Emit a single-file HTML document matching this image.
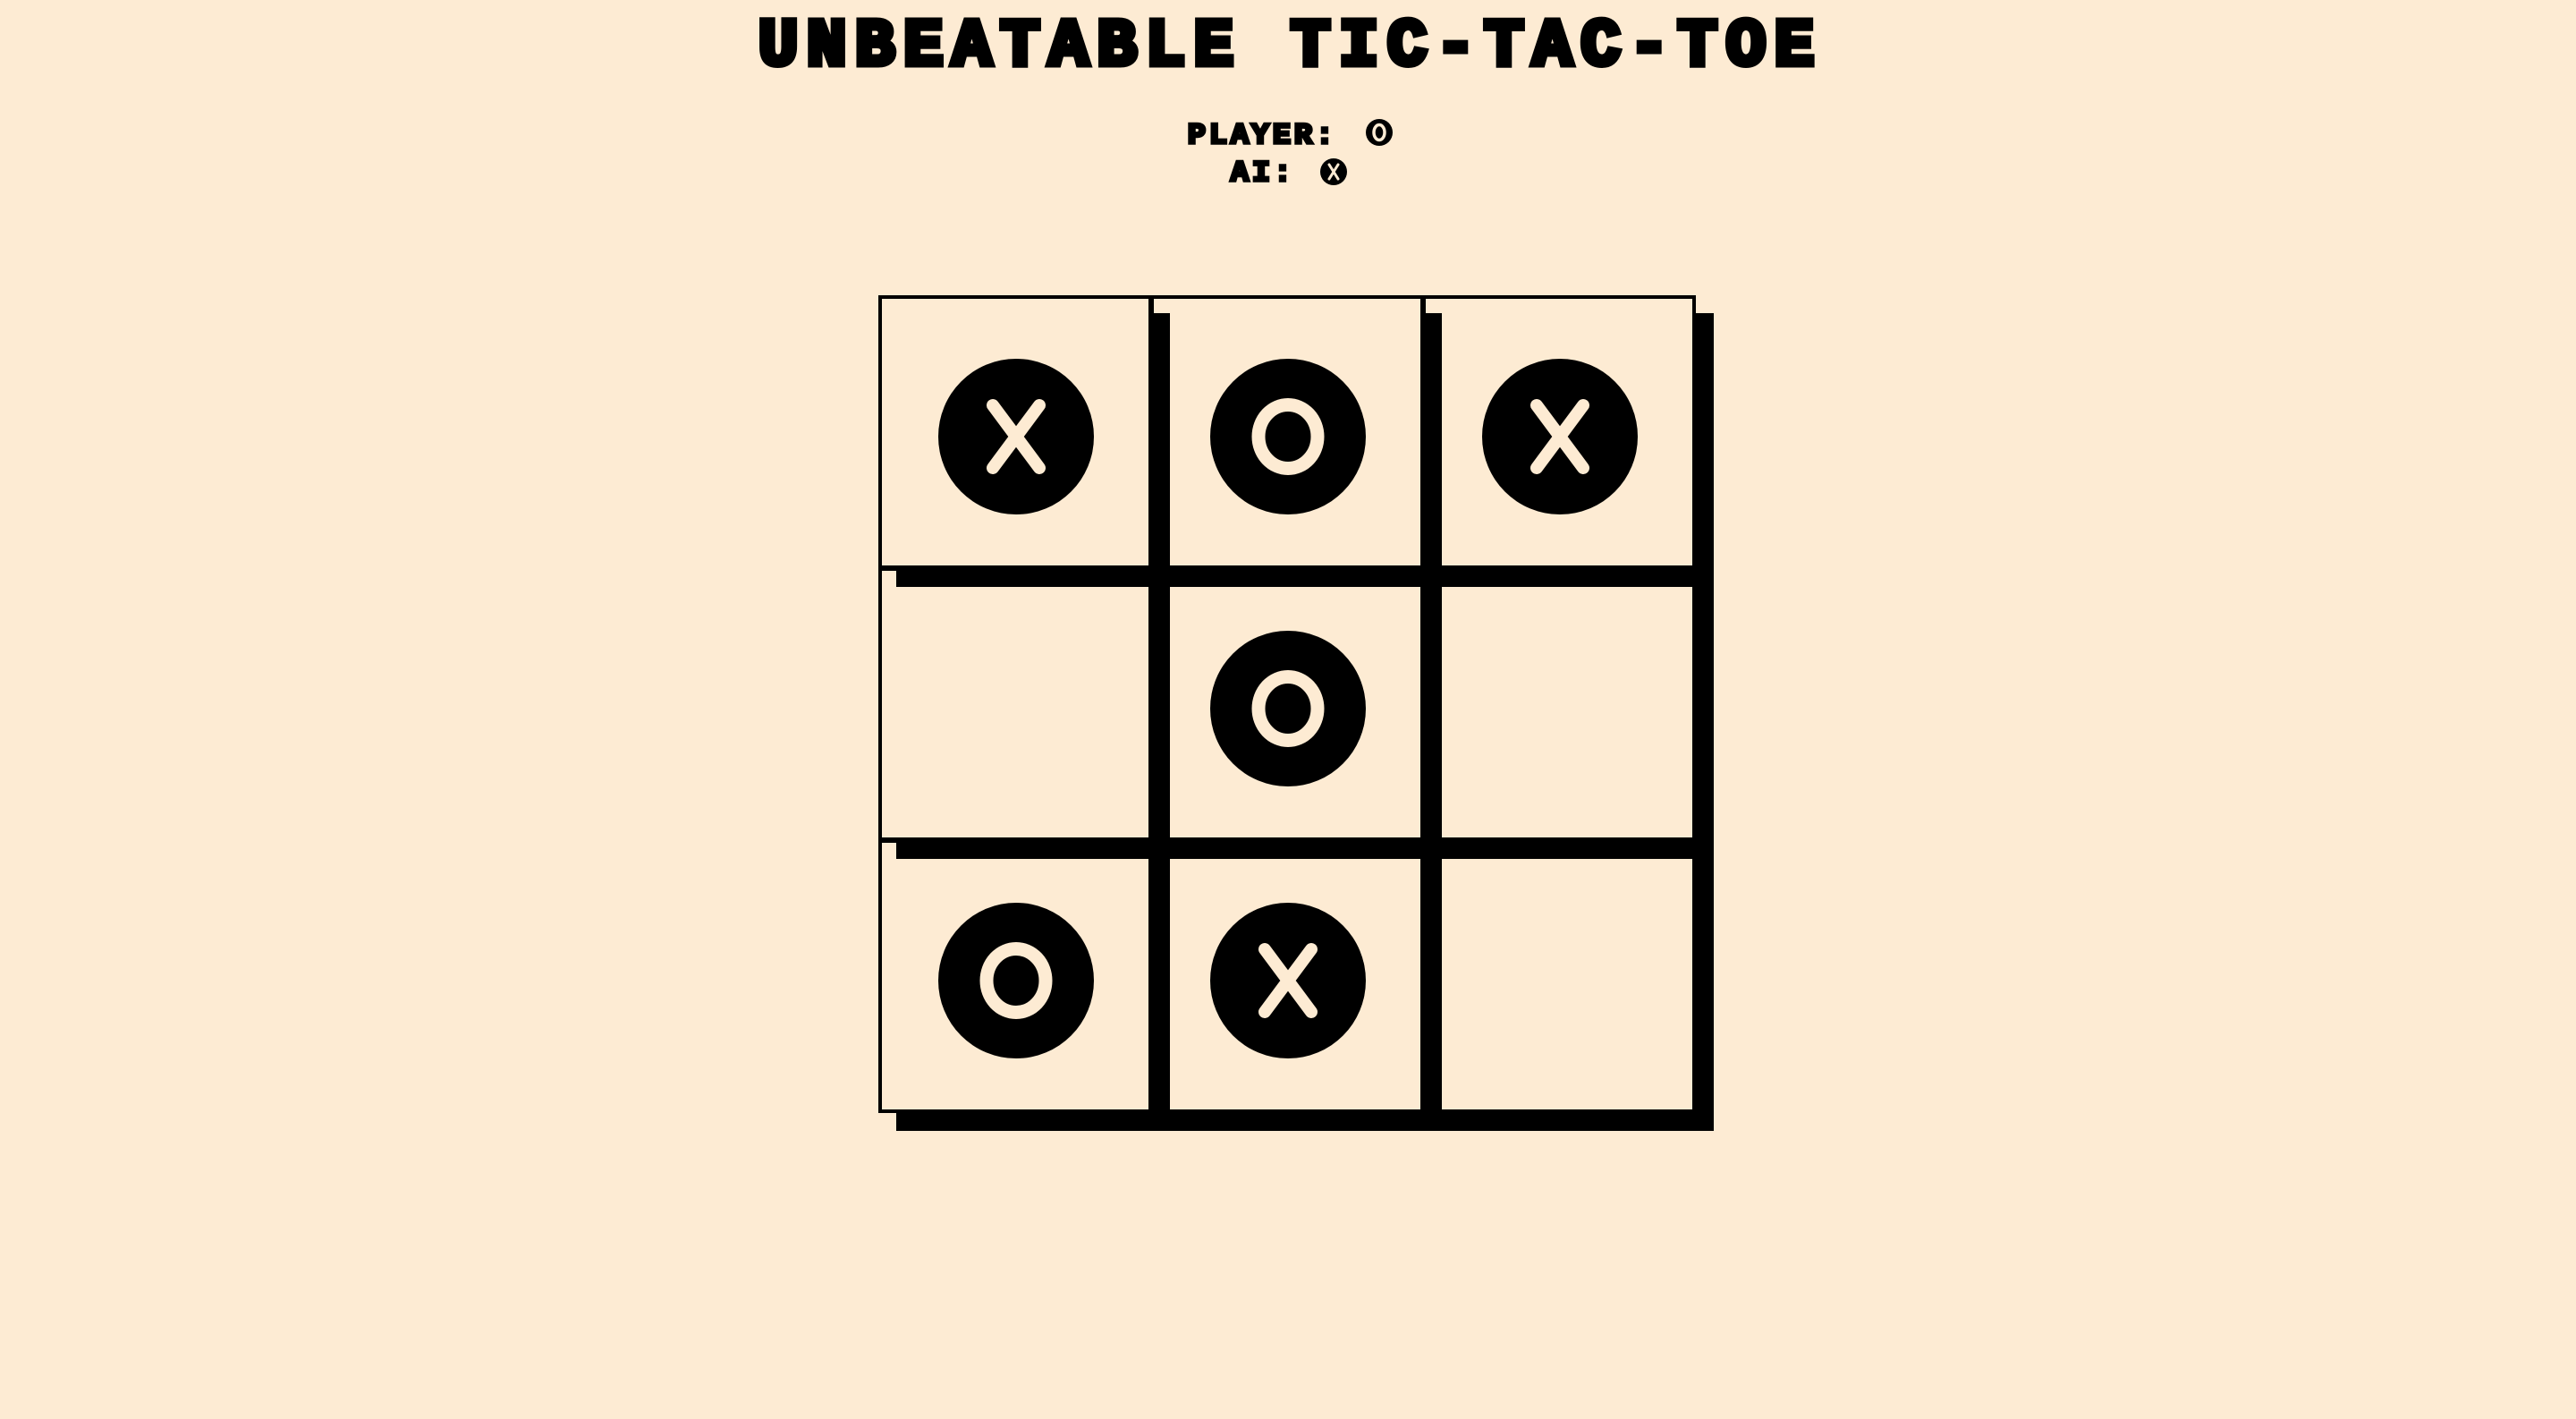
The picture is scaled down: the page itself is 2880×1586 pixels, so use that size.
<!DOCTYPE html>
<html><head><meta charset="utf-8"><style>
html,body{margin:0;padding:0;background:#fdebd3;width:2880px;height:1586px;overflow:hidden;position:relative}
svg{position:absolute;left:0;top:0}
.t{position:absolute;top:13px;left:843px;height:80px;font-family:"Liberation Mono",monospace;font-weight:bold;font-size:74px;line-height:80px;color:#000;-webkit-text-stroke:7px #000;white-space:pre}
.t span{display:inline-block;width:54.1px;text-align:center;transform:scaleX(1.0)}
.s{position:absolute;font-family:"Liberation Mono",monospace;font-weight:bold;font-size:32px;line-height:36px;color:#000;-webkit-text-stroke:3.5px #000;white-space:pre}
.s span{display:inline-block;width:23.8px;text-align:center;transform:scaleX(1.05)}
</style></head><body>
<div class="t"><span>U</span><span>N</span><span>B</span><span>E</span><span>A</span><span>T</span><span>A</span><span>B</span><span>L</span><span>E</span><span> </span><span>T</span><span>I</span><span>C</span><span>-</span><span>T</span><span>A</span><span>C</span><span>-</span><span>T</span><span>O</span><span>E</span></div>
<div class="s" style="left:1326px;top:134px"><span>P</span><span>L</span><span>A</span><span>Y</span><span>E</span><span>R</span><span>:</span></div>
<div class="s" style="left:1374px;top:176px"><span>A</span><span>I</span><span>:</span></div>
<svg width="2880" height="1586" viewBox="0 0 2880 1586" xmlns="http://www.w3.org/2000/svg">
<defs>
<g id="xm"><circle r="87" fill="#000"/><path d="M-26,-35 L26,35 M26,-35 L-26,35" stroke="#fdebd3" stroke-width="14" stroke-linecap="round"/></g>
<g id="om"><circle r="87" fill="#000"/><ellipse rx="33" ry="35.5" fill="none" stroke="#fdebd3" stroke-width="15"/></g>
</defs>
<g transform="translate(1542,148)"><circle r="15" fill="#000"/><ellipse rx="6" ry="8.5" fill="none" stroke="#fdebd3" stroke-width="3.5"/></g>
<g transform="translate(1491,192)"><circle r="15" fill="#000"/><path d="M-5,-8 L5,8 M5,-8 L-5,8" stroke="#fdebd3" stroke-width="3" stroke-linecap="round"/></g>
<g stroke="#000" stroke-width="4" fill="#fdebd3">
<rect x="1610" y="958" width="306" height="306" fill="#000" stroke="none"/><rect x="1592" y="940" width="302" height="302"/>
<rect x="1306" y="958" width="306" height="306" fill="#000" stroke="none"/><rect x="1288" y="940" width="302" height="302"/>
<rect x="1002" y="958" width="306" height="306" fill="#000" stroke="none"/><rect x="984" y="940" width="302" height="302"/>
<rect x="1610" y="654" width="306" height="306" fill="#000" stroke="none"/><rect x="1592" y="636" width="302" height="302"/>
<rect x="1306" y="654" width="306" height="306" fill="#000" stroke="none"/><rect x="1288" y="636" width="302" height="302"/>
<rect x="1002" y="654" width="306" height="306" fill="#000" stroke="none"/><rect x="984" y="636" width="302" height="302"/>
<rect x="1610" y="350" width="306" height="306" fill="#000" stroke="none"/><rect x="1592" y="332" width="302" height="302"/>
<rect x="1306" y="350" width="306" height="306" fill="#000" stroke="none"/><rect x="1288" y="332" width="302" height="302"/>
<rect x="1002" y="350" width="306" height="306" fill="#000" stroke="none"/><rect x="984" y="332" width="302" height="302"/>
</g>
<use href="#xm" x="1136" y="488"/>
<use href="#om" x="1440" y="488"/>
<use href="#xm" x="1744" y="488"/>
<use href="#om" x="1440" y="792"/>
<use href="#om" x="1136" y="1096"/>
<use href="#xm" x="1440" y="1096"/>
</svg>
</body></html>
